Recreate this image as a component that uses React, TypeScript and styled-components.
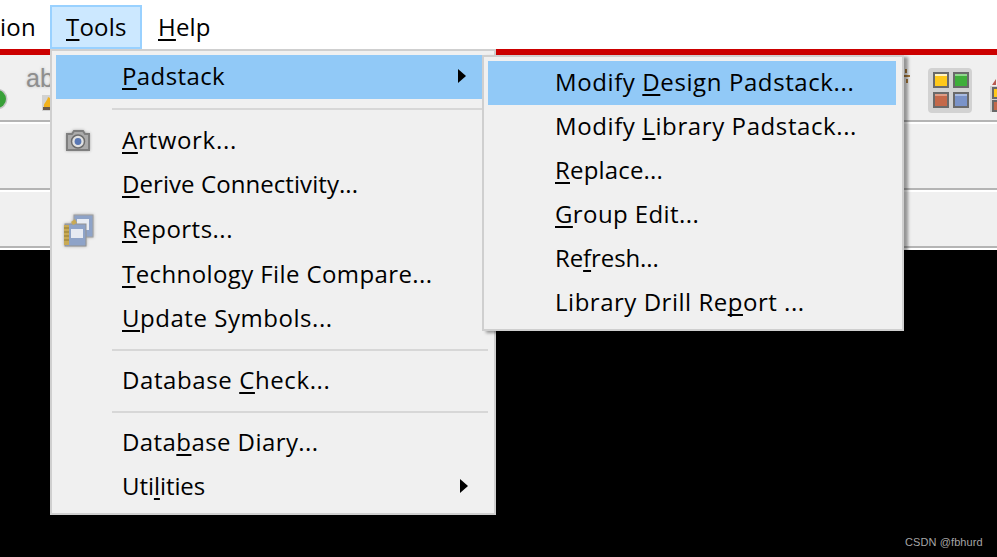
import React from "react";
import styled, { createGlobalStyle } from "styled-components";

const Global = createGlobalStyle`
  html, body { margin: 0; padding: 0; background: #000; }
  #root { width: 997px; height: 557px; }
`;

const FONT = `"Open Sans", "Noto Sans", "Liberation Sans", sans-serif`;

const Window = styled.div`
  position: relative;
  width: 997px;
  height: 557px;
  overflow: hidden;
  display: flex;
  flex-direction: column;
  background: #000;
  font-family: ${FONT};
  font-size: 24px;
  letter-spacing: 0.48px;
  color: #000;
`;

const MenuBar = styled.div`
  height: 49px;
  flex: none;
  background: #fff;
  display: flex;
  align-items: flex-start;
  padding-top: 5px;
  box-sizing: border-box;
`;

const BarItem = styled.div<{ $active?: boolean; $width: number; $pad: number }>`
  box-sizing: border-box;
  width: ${(p) => p.$width}px;
  height: 44px;
  padding-left: ${(p) => p.$pad}px;
  line-height: 40px;
  white-space: nowrap;
  letter-spacing: 0.2px;
  border: 2px solid ${(p) => (p.$active ? "#99d1ff" : "transparent")};
  background: ${(p) => (p.$active ? "#cce8ff" : "transparent")};
`;

const Clipped = styled.span`
  margin-left: -2px;
`;

const Key = styled.span`
  text-decoration: underline;
  text-decoration-thickness: 2px;
  text-underline-offset: 3px;
  text-decoration-skip-ink: none;
`;

const RedBar = styled.div`
  height: 6px;
  flex: none;
  background: #cc0000;
`;

const ToolRow = styled.div<{ $h: number }>`
  height: ${(p) => p.$h}px;
  flex: none;
  box-sizing: border-box;
  background: #f0f0f0;
  border-bottom: 2px solid #b4b4b4;
  box-shadow: 0 2px 0 #fff;
  margin-bottom: 2px;
  position: relative;
`;

const ToolIcons = styled.div`
  display: flex;
  align-items: flex-start;
  height: 100%;
`;

const Grey = styled.span`
  margin: 9px 0 0 26px;
  font-size: 25px;
  line-height: 28px;
  letter-spacing: 0;
  color: #8e8e8e;
  text-shadow: 0 0 3px #bdbdbd;
  font-family: "Liberation Sans", sans-serif;
`;

const Glyph = styled.svg<{ $x: number; $y: number }>`
  position: absolute;
  left: ${(p) => p.$x}px;
  top: ${(p) => p.$y}px;
`;

const Canvas = styled.div`
  flex: 1;
  background: #000;
`;

const Watermark = styled.div`
  position: absolute;
  left: 905px;
  top: 535px;
  font: 11px/14px "Liberation Sans", sans-serif;
  color: #a6a6a6;
  letter-spacing: 0.1px;
`;

const Menu = styled.div<{ $x: number; $y: number; $w: number; $shadow?: boolean }>`
  position: absolute;
  left: ${(p) => p.$x}px;
  top: ${(p) => p.$y}px;
  width: ${(p) => p.$w}px;
  box-sizing: border-box;
  background: #f0f0f0;
  border: 2px solid #cfcfcf;
  padding: 4px;
  box-shadow: ${(p) => (p.$shadow ? "4px 2px 3px rgba(0,0,0,0.38)" : "none")};
`;

const Row = styled.div<{ $hi?: boolean; $h?: number; $pad: number; $ls?: number }>`
  position: relative;
  height: ${(p) => p.$h ?? 44}px;
  line-height: ${(p) => (p.$h ?? 44) - 2}px;
  padding-left: ${(p) => p.$pad}px;
  white-space: nowrap;
  letter-spacing: ${(p) => p.$ls ?? 0.48}px;
  background: ${(p) => (p.$hi ? "#91c9f7" : "transparent")};
  margin-right: ${(p) => (p.$hi ? 2 : 0)}px;
`;

const Sep = styled.div<{ $h: number }>`
  height: ${(p) => p.$h}px;
  display: flex;
  align-items: center;
  padding-left: 56px;
  &::after {
    content: "";
    flex: 1;
    height: 2px;
    margin-right: 2px;
    background: #d7d7d7;
  }
`;

const Arrow = styled.span`
  position: absolute;
  right: 22px;
  top: 50%;
  margin-top: -8px;
  width: 0;
  height: 0;
  border-left: 8px solid #000;
  border-top: 7px solid transparent;
  border-bottom: 7px solid transparent;
`;

const RowIcon = styled.svg`
  position: absolute;
  left: 5px;
  top: 50%;
  transform: translateY(-50%);
  filter: blur(0.5px) drop-shadow(0 0 1.5px #a8a8a8);
`;

const Camera = () => (
  <RowIcon width="34" height="32" viewBox="0 0 34 32">
    <path d="M6 9h5l2-3h9l2 3h4v16H6z" fill="#ababab" stroke="#7f7f7f" strokeWidth="2" />
    <circle cx="17" cy="16.5" r="6.5" fill="#e2e2e2" stroke="#6c6c6c" strokeWidth="1.5" />
    <circle cx="17" cy="16.5" r="3.4" fill="#5a78b4" />
  </RowIcon>
);

const Reports = () => (
  <RowIcon width="34" height="36" viewBox="0 0 34 36">
    <rect x="13" y="3" width="19" height="22" fill="#8ea3c8" stroke="#a0a0a0" />
    <rect x="16" y="7" width="12" height="11" fill="#e8ecf3" />
    <rect x="4" y="12" width="21" height="22" fill="#8ea3c8" stroke="#929292" />
    <rect x="10" y="17" width="12" height="9" fill="#e6eaf2" />
    <rect x="3" y="13" width="5" height="20" fill="#c9aa55" />
    <path d="M3 16h5M3 20h5M3 24h5M3 28h5" stroke="#8f7a32" strokeWidth="1.2" />
    <path d="M10 10l4-3 2 4-4 2z" fill="#c9aa55" />
  </RowIcon>
);

const QUAD: [number, number, string, string][] = [
  [5, 4, "#ffc91a", "#fff3c0"],
  [25, 4, "#3fae3a", "#8fd68c"],
  [5, 24, "#c4694a", "#dd9c85"],
  [25, 24, "#7a93c8", "#a9bbe0"],
];

const Quad = () => (
  <Glyph $x={928} $y={13} width="44" height="45" viewBox="0 0 44 45">
    <rect width="44" height="45" rx="4" fill="#d2d2d2" />
    {QUAD.map(([x, y, c, hi]) => (
      <g key={c}>
        <rect x={x} y={y} width="16" height="16" fill="#6a6a6a" />
        <rect x={x + 2} y={y + 2} width="12" height="12" fill={c} />
        <rect x={x + 2} y={y + 2} width="12" height="2" fill={hi} />
      </g>
    ))}
  </Glyph>
);

const Edge = () => (
  <Glyph $x={990} $y={22} width="7" height="35" viewBox="0 0 7 35">
    <rect y="9" width="7" height="26" fill="#d2d2d2" />
    <path d="M2 8l4-6v6z" fill="#b85a50" />
    <rect x="3" y="11" width="5" height="10" fill="#ffc91a" stroke="#686868" strokeWidth="2" />
    <rect x="3" y="24" width="5" height="10" fill="#c4694a" stroke="#686868" strokeWidth="2" />
  </Glyph>
);

const LeftBits = () => (
  <>
    <Glyph $x={0} $y={32} width="9" height="24" viewBox="0 0 9 24">
      <circle cx="-3" cy="12" r="10.5" fill="#c4c4c4" />
      <circle cx="-3" cy="12" r="9" fill="#38a038" />
    </Glyph>
    <Glyph $x={42} $y={38} width="8" height="20" viewBox="0 0 8 20">
      <rect x="0" y="2" width="8" height="16" fill="#d2d2d2" />
      <path d="M2 14c-1-4 3-5 4-10l2 1v9z" fill="#f2b21c" />
      <path d="M1 14h7v3H1z" fill="#6b5a4a" />
    </Glyph>
  </>
);

const Brown = () => (
  <Glyph $x={904} $y={12} width="6" height="22" viewBox="0 0 6 22">
    <path d="M1 2h2v4H1zM0 8h6v2H0zM2 12h2v4H2z" fill="#a87a3c" />
  </Glyph>
);

export default function App() {
  return (
    <Window>
      <Global />
      <MenuBar>
        <BarItem $width={50} $pad={0}>
          <Clipped>ion</Clipped>
        </BarItem>
        <BarItem $active $width={92} $pad={14}>
          <Key>T</Key>ools
        </BarItem>
        <BarItem $width={90} $pad={14}>
          <Key>H</Key>elp
        </BarItem>
      </MenuBar>
      <RedBar />
      <ToolRow $h={67}>
        <ToolIcons>
          <LeftBits />
          <Grey>ab</Grey>
          <Brown />
          <Quad />
          <Edge />
        </ToolIcons>
      </ToolRow>
      <ToolRow $h={66} />
      <ToolRow $h={56} />
      <Canvas />
      <Watermark>CSDN @fbhurd</Watermark>

      <Menu $x={50} $y={49} $w={446}>
        <Row $hi $pad={66} $ls={0.4}>
          <Key>P</Key>adstack
          <Arrow />
        </Row>
        <Sep $h={20} />
        <Row $pad={66} $ls={0.7}>
          <Camera />
          <Key>A</Key>rtwork...
        </Row>
        <Row $pad={66} $ls={0.07}>
          <Key>D</Key>erive Connectivity...
        </Row>
        <Row $pad={66} $h={46}>
          <Reports />
          <Key>R</Key>eports...
        </Row>
        <Row $pad={66} $ls={0.4}>
          <Key>T</Key>echnology File Compare...
        </Row>
        <Row $pad={66} $ls={0.54}>
          <Key>U</Key>pdate Symbols...
        </Row>
        <Sep $h={18} />
        <Row $pad={66} $ls={0.6}>
          Database <Key>C</Key>heck...
        </Row>
        <Sep $h={18} />
        <Row $pad={66} $ls={0.42}>
          Data<Key>b</Key>ase Diary...
        </Row>
        <Row $pad={66} $ls={-0.07}>
          Uti<Key>l</Key>ities
          <Arrow />
        </Row>
      </Menu>

      <Menu $x={482} $y={55} $w={422} $shadow>
        <Row $hi $pad={67} $ls={0.6}>
          Modify <Key>D</Key>esign Padstack...
        </Row>
        <Row $pad={67} $ls={0.6}>
          Modify <Key>L</Key>ibrary Padstack...
        </Row>
        <Row $pad={67} $ls={0.18}>
          <Key>R</Key>eplace...
        </Row>
        <Row $pad={67} $ls={0.4}>
          <Key>G</Key>roup Edit...
        </Row>
        <Row $pad={67} $ls={-0.1}>
          Re<Key>f</Key>resh...
        </Row>
        <Row $pad={67} $ls={0.52}>
          Library Drill Re<Key>p</Key>ort ...
        </Row>
      </Menu>
    </Window>
  );
}
